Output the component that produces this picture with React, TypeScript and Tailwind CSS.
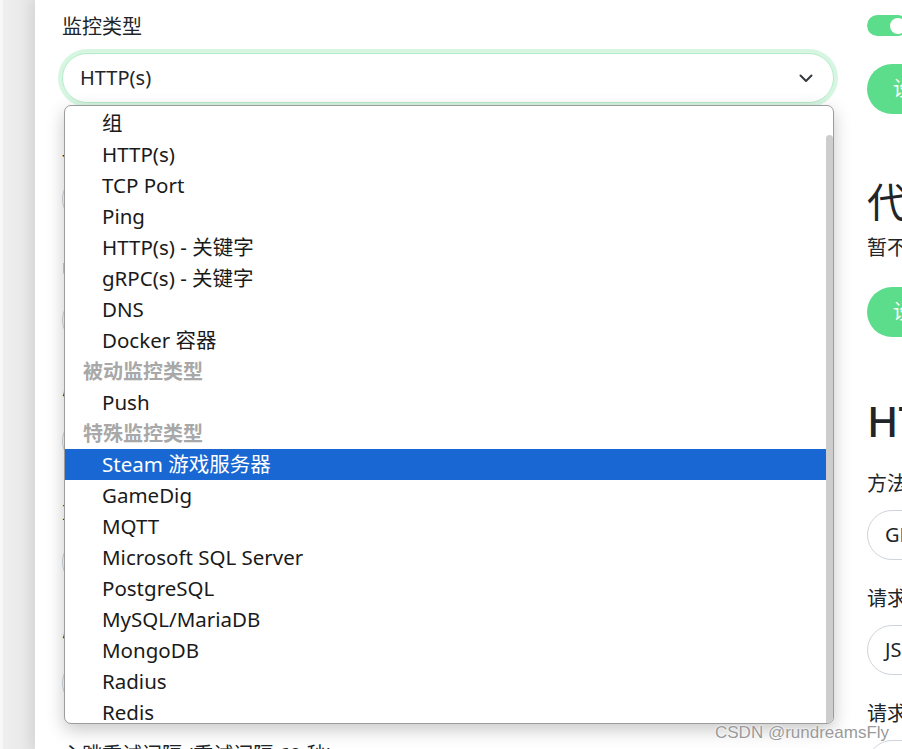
import React from 'react';

const FONT = '"Noto Sans", "Noto Sans CJK SC", sans-serif';

type Opt = { label: string; group?: boolean; selected?: boolean };

const options: Opt[] = [
  { label: '组' },
  { label: 'HTTP(s)' },
  { label: 'TCP Port' },
  { label: 'Ping' },
  { label: 'HTTP(s) - 关键字' },
  { label: 'gRPC(s) - 关键字' },
  { label: 'DNS' },
  { label: 'Docker 容器' },
  { label: '被动监控类型', group: true },
  { label: 'Push' },
  { label: '特殊监控类型', group: true },
  { label: 'Steam 游戏服务器', selected: true },
  { label: 'GameDig' },
  { label: 'MQTT' },
  { label: 'Microsoft SQL Server' },
  { label: 'PostgreSQL' },
  { label: 'MySQL/MariaDB' },
  { label: 'MongoDB' },
  { label: 'Radius' },
  { label: 'Redis' },
];

// fields hidden behind the open dropdown
const hiddenFields = ['显示名称', 'URL', '心跳间隔 (检测频率 60 秒)', '重试次数', '心跳重试间隔'];

function Chevron() {
  return (
    <svg width="14" height="9" viewBox="0 0 14 9" fill="none">
      <path d="M1.5 1.5 7 7l5.5-5.5" stroke="#343a40" strokeWidth="2" strokeLinecap="round" strokeLinejoin="round" />
    </svg>
  );
}

function Field({ label, value }: { label: string; value?: string }) {
  return (
    <div className="mt-[31px]">
      <div className="h-[30px] leading-[30px] text-[20px] text-[#212529]">{label}</div>
      <div className="mt-[10px] h-[50px] rounded-full border border-[#ced4da] bg-white px-[18px] leading-[48px] text-[20px]">
        {value}
      </div>
    </div>
  );
}

function TypeDropdown() {
  return (
    <div className="absolute left-[64px] top-[105px] w-[770px] h-[619px] overflow-hidden rounded-[7px] border border-[#9c9c9c] bg-white shadow-[0_6px_18px_rgba(0,0,0,0.22)]">
      <div className="pt-[2px] pr-[7px]">
        {options.map((o) => (
          <div
            key={o.label}
            className={
              o.group
                ? 'h-[31px] leading-[31px] pl-[18px] text-[20px] font-bold text-[#a8a8a8]'
                : o.selected
                ? 'h-[31px] leading-[31px] pl-[37px] text-[20.5px] text-white bg-[#1967d2]'
                : 'h-[31px] leading-[31px] pl-[37px] text-[20.5px] text-[#1a1a1a]'
            }
          >
            {o.label}
          </div>
        ))}
      </div>
      {/* scrollbar */}
      <div className="absolute right-0 top-[29px] bottom-0 w-[7px] rounded-t-[4px] bg-[#cdcdcd]" />
    </div>
  );
}

export default function App() {
  return (
    <div className="relative w-[902px] h-[749px] overflow-hidden bg-[#ededed] flex" style={{ fontFamily: FONT }}>
      <div className="w-[3px] shrink-0 bg-[#f8f8f8]" />
      <div className="w-[32px] shrink-0 bg-gradient-to-r from-[#efefef] to-[#e6e6e6]" />

      {/* card */}
      <div className="flex-1 min-w-0 overflow-hidden bg-white shadow-[-4px_0_12px_rgba(0,0,0,0.08)] pl-[27px] flex gap-[33px] text-[#212529]">
        {/* left column */}
        <div className="w-[772px] shrink-0 pt-[12px]">
          <div className="h-[30px] leading-[30px] text-[20px]">监控类型</div>
          <div className="mt-[11px] h-[50px] rounded-full border border-[#b6ecc9] bg-white shadow-[0_0_0_4px_rgba(92,221,139,0.25)] pl-[17px] pr-[20px] flex items-center justify-between text-[20px]">
            <span>HTTP(s)</span>
            <Chevron />
          </div>
          {hiddenFields.map((f) => (
            <Field key={f} label={f} />
          ))}
          <div className="mt-[32px] h-[30px] leading-[30px] text-[20px]">心跳重试间隔 (重试间隔 60 秒)</div>
        </div>

        {/* right column */}
        <div className="w-[300px] shrink-0 pt-[15px]">
          <div className="relative h-[21px] w-[41px] rounded-full bg-[#5cdd8b]">
            <div className="absolute right-[2px] top-[2.5px] h-[16px] w-[16px] rounded-full bg-white" />
          </div>
          <div className="mt-[28px] h-[50px] w-[120px] rounded-full bg-[#5cdd8b] pl-[26px] leading-[50px] text-[20px] text-white">
            设置
          </div>
          <div className="mt-[64px] h-[48px] leading-[48px] text-[40px]">代理</div>
          <div className="mt-[7px] h-[30px] leading-[30px] text-[20px]">暂不可用，请先设置。</div>
          <div className="mt-[24px] h-[50px] w-[140px] rounded-full bg-[#5cdd8b] pl-[26px] leading-[50px] text-[20px] text-white">
            设置代理
          </div>
          <div className="mt-[60px] h-[48px] leading-[48px] text-[42px] font-medium">HTTP 选项</div>
          <div className="mt-[24px] h-[30px] leading-[30px] text-[20px]">方法</div>
          <div className="mt-[11px] h-[50px] rounded-full border border-[#ced4da] pl-[17px] leading-[48px] text-[20px]">GET</div>
          <div className="mt-[24px] h-[30px] leading-[30px] text-[20px]">请求体编码</div>
          <div className="mt-[11px] h-[50px] rounded-full border border-[#ced4da] pl-[17px] leading-[48px] text-[20px]">JSON</div>
          <div className="mt-[24px] h-[30px] leading-[30px] text-[20px]">请求体</div>
          <div className="mt-[11px] h-[50px] rounded-full border border-[#ced4da]" />
        </div>
      </div>

      <TypeDropdown />

      <div
        className="absolute left-[715px] top-[720px] text-[17px] text-[#9a9a9a]"
        style={{ fontFamily: '"Liberation Sans", Arial, sans-serif', textShadow: '0 0 2px #fff, 0 0 2px #fff' }}
      >
        CSDN @rundreamsFly
      </div>
    </div>
  );
}
